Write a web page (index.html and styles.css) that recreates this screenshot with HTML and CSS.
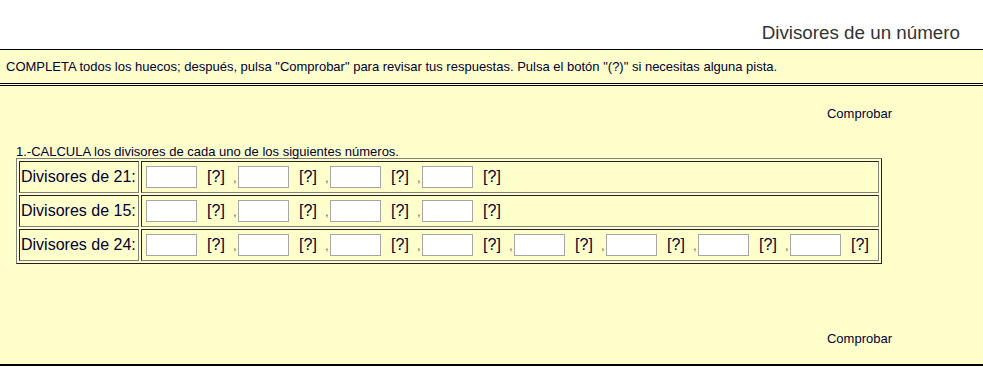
FILE: index.html
```html
<!DOCTYPE html>
<html lang="es">
<head>
<meta charset="utf-8">
<title>Divisores de un número</title>
<link rel="stylesheet" href="styles.css">
</head>
<body>
<div class="header"><h1 class="title">Divisores de un número</h1></div>
<div class="instructions">COMPLETA todos los huecos; después, pulsa "Comprobar" para revisar tus respuestas. Pulsa el botón "(?)" si necesitas alguna pista.</div>
<div class="main">
  <div class="check-row"><span class="check">Comprobar</span></div>
  <div class="question">1.-CALCULA los divisores de cada uno de los siguientes números.</div>
  <table class="grid">
    <tr>
      <td class="label">Divisores de 21:</td>
      <td class="answers"><div class="row">
        <input class="gap"><span class="hint">[?]</span><span class="sep">,</span>
        <input class="gap"><span class="hint">[?]</span><span class="sep">,</span>
        <input class="gap"><span class="hint">[?]</span><span class="sep">,</span>
        <input class="gap"><span class="hint">[?]</span>
      </div></td>
    </tr>
    <tr>
      <td class="label">Divisores de 15:</td>
      <td class="answers"><div class="row">
        <input class="gap"><span class="hint">[?]</span><span class="sep">,</span>
        <input class="gap"><span class="hint">[?]</span><span class="sep">,</span>
        <input class="gap"><span class="hint">[?]</span><span class="sep">,</span>
        <input class="gap"><span class="hint">[?]</span>
      </div></td>
    </tr>
    <tr>
      <td class="label">Divisores de 24:</td>
      <td class="answers"><div class="row">
        <input class="gap"><span class="hint">[?]</span><span class="sep">,</span>
        <input class="gap"><span class="hint">[?]</span><span class="sep">,</span>
        <input class="gap"><span class="hint">[?]</span><span class="sep">,</span>
        <input class="gap"><span class="hint">[?]</span><span class="sep">,</span>
        <input class="gap"><span class="hint">[?]</span><span class="sep">,</span>
        <input class="gap"><span class="hint">[?]</span><span class="sep">,</span>
        <input class="gap"><span class="hint">[?]</span><span class="sep">,</span>
        <input class="gap"><span class="hint">[?]</span>
      </div></td>
    </tr>
  </table>
  <div class="check-row bottom"><span class="check">Comprobar</span></div>
</div>
</body>
</html>
```

FILE: styles.css
```css
html, body {
  margin: 0;
  padding: 0;
  background: #ffffff;
  font-family: "Liberation Sans", Arial, sans-serif;
  color: #000033;
}

.header {
  box-sizing: border-box;
  height: 50px;
  padding: 22px 23px 0 0;
  border-bottom: 1px solid #000;
  background: #ffffff;
}

.title {
  margin: 0;
  text-align: right;
  font-weight: normal;
  font-size: 18.8px;
  line-height: 21px;
  color: #333333;
}

.instructions {
  background: #ffffcc;
  font-size: 13px;
  line-height: 15px;
  padding: 9px 6px 9px 6px;
  border-bottom: 3px double #000;
}

.main {
  background: #ffffcc;
  padding: 21px 16px 18px 16px;
  border-bottom: 2px solid #000;
}

.check-row {
  display: flex;
  justify-content: flex-end;
  padding-right: 75px;
  font-size: 13px;
  line-height: 14px;
}

.check-row.bottom {
  margin-top: 68px;
}

.check {
  color: #000033;
}

.question {
  margin-top: 24px;
  font-size: 13px;
  line-height: 13px;
}

.grid {
  border-collapse: separate;
  border-spacing: 2px;
  border-style: solid;
  border-width: 1px;
  border-color: #808080 #222 #222 #808080;
  width: 866px;
}

.grid td {
  border-style: solid;
  border-width: 1px;
  border-color: #222 #808080 #808080 #222;
  padding: 1px;
  font-size: 16px;
}

.label {
  width: 116px;
  padding-left: 2px;
  white-space: nowrap;
}

.row {
  display: flex;
  align-items: center;
  height: 28px;
  padding-left: 3px;
}

.gap {
  box-sizing: border-box;
  width: 51px;
  height: 22px;
  margin: 0 0 0 1px;
  padding: 0;
  border: 1px solid #a6a6a6;
  background: #ffffff;
  font-size: 13px;
}

.row .gap:first-child {
  margin-left: 0;
}

.hint {
  display: inline-block;
  width: 18px;
  margin-left: 10px;
  text-align: center;
  font-size: 16px;
  color: #000033;
}

.sep {
  display: inline-block;
  width: 4px;
  margin-left: 8px;
  font-size: 13px;
  color: #4f6f88;
}
```
